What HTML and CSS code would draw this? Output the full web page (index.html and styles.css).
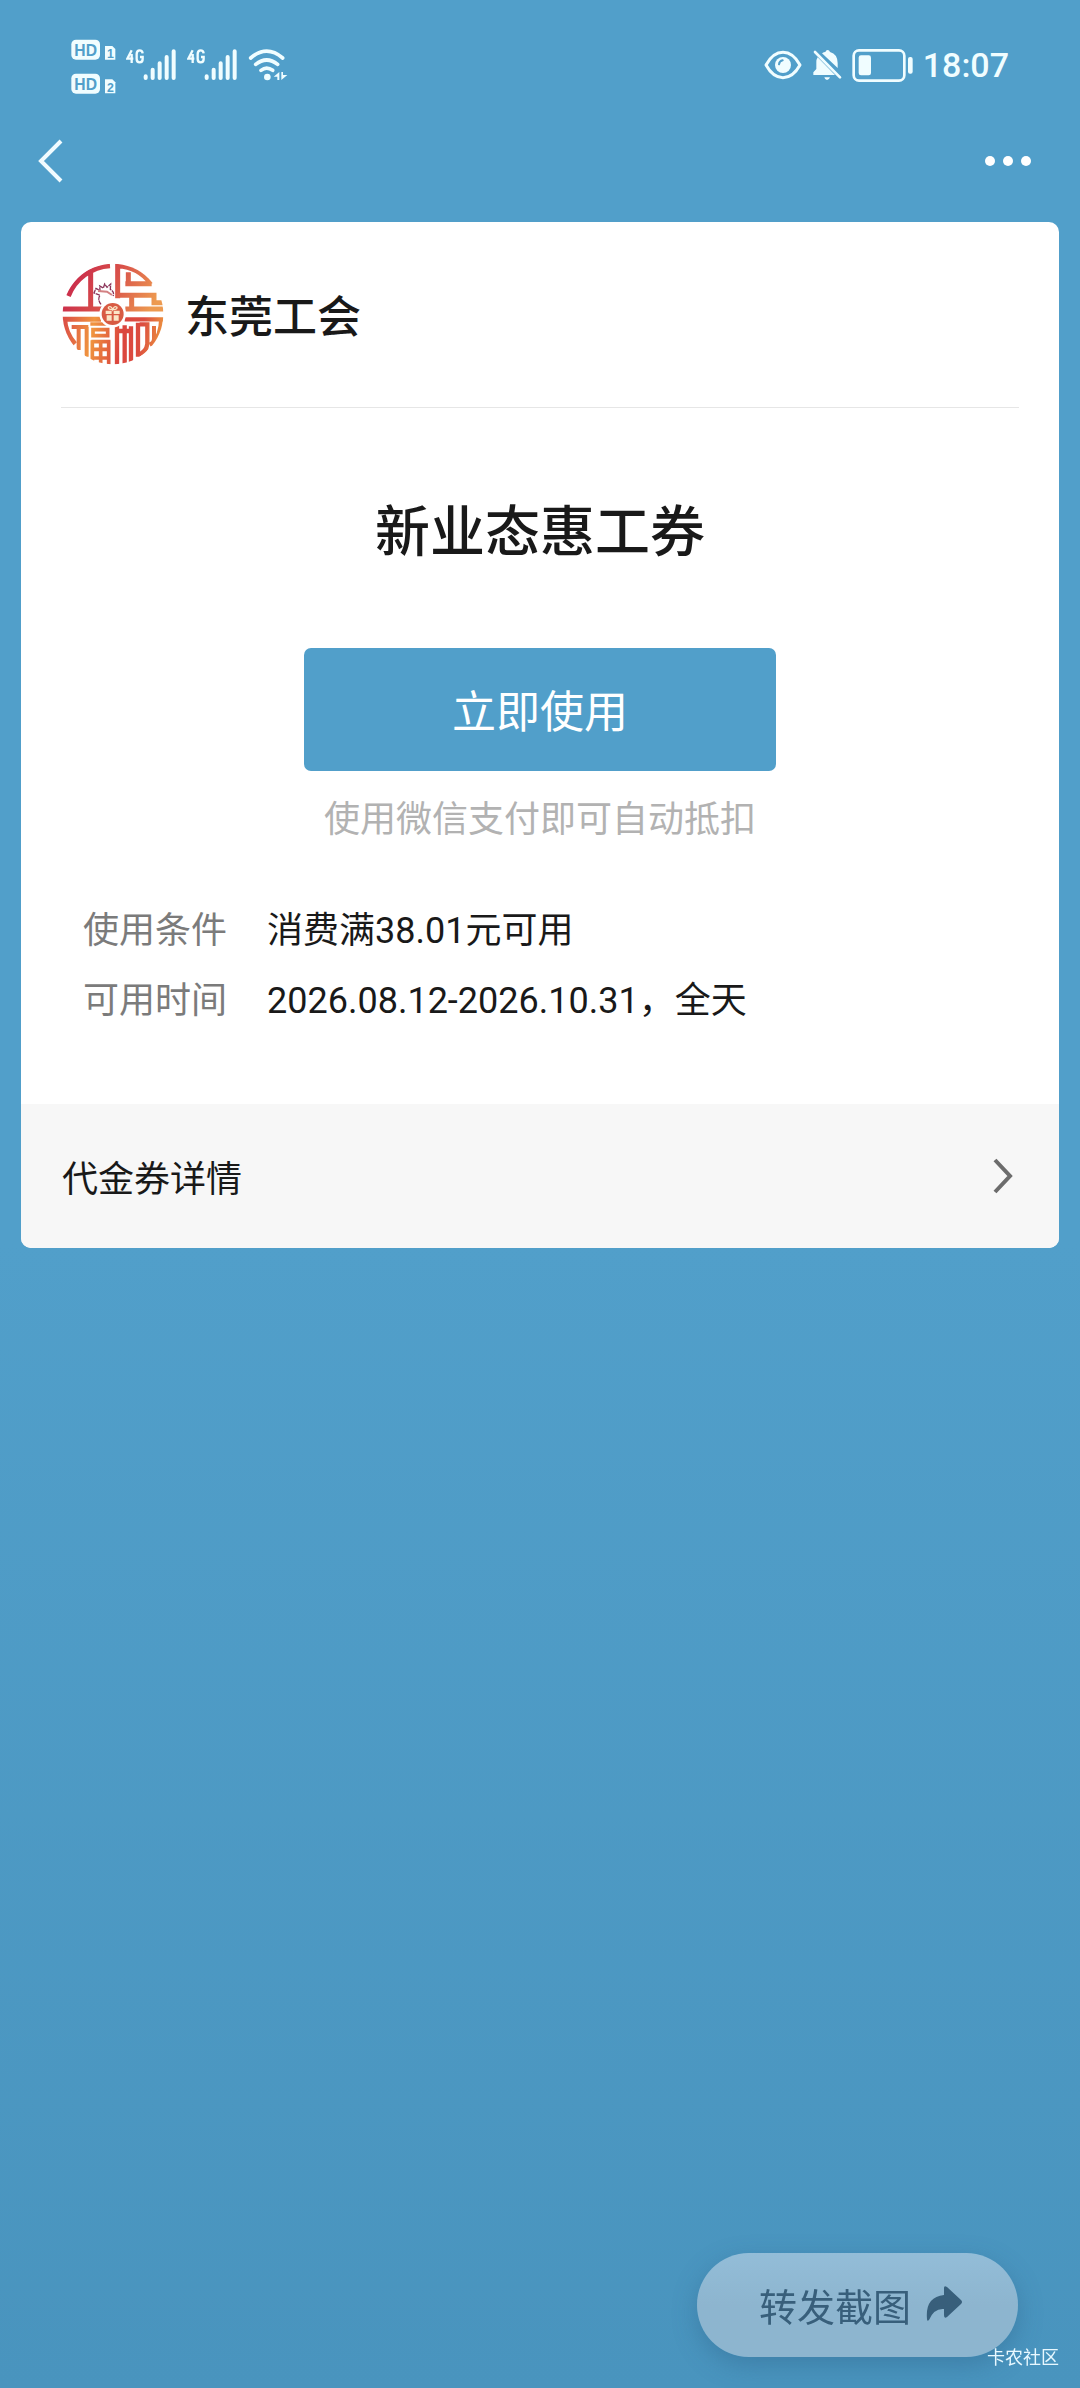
FILE: index.html
```
<!DOCTYPE html>
<html lang="zh-CN">
<head>
  <meta charset="UTF-8">
  <meta name="viewport" content="width=device-width, initial-scale=1.0">
  <title>新业态惠工券</title>
  <link rel="stylesheet" href="styles.css">
</head>
<body>

<div class="status-bar">
  <div class="status-group status-left">
    <svg width="45" height="60" viewBox="63 30 135 180">
      <rect x="64" y="44" width="86" height="60" rx="14" fill="#f0fdff"/>
      <text class="hd" x="107" y="92">HD</text>
      <path d="M165 63h22l9 9v32h-31z" fill="#f0fdff"/>
      <text class="sim" x="181" y="99">1</text>
      <rect x="64" y="146" width="86" height="60" rx="14" fill="#f0fdff"/>
      <text class="hd" x="107" y="194">HD</text>
      <path d="M165 163h22l9 9v33h-31z" fill="#f0fdff"/>
      <text class="sim" x="181" y="200">2</text>
    </svg>
    <svg width="51" height="60" viewBox="229 30 153 180">
      <path d="M246 76L233 101H251M246 87V114" class="net"/>
      <path d="M279 85Q278 76 270 76Q261 76 261 87V102Q261 112 270 112Q279 112 279 102V96H271" class="net"/>
      <path d="M288 154v5M309 134v25M330 115v44M351 96v63M372 79v80" class="bars"/>
    </svg>
    <svg width="51" height="60" viewBox="229 30 153 180">
      <path d="M246 76L233 101H251M246 87V114" class="net"/>
      <path d="M279 85Q278 76 270 76Q261 76 261 87V102Q261 112 270 112Q279 112 279 102V96H271" class="net"/>
      <path d="M288 154v5M309 134v25M330 115v44M351 96v63M372 79v80" class="bars"/>
    </svg>
    <svg width="40" height="60" viewBox="588 30 120 180">
      <path d="M596 99Q644 58 692 99M611 118Q644 92 677 118M627 136Q644 123 662 136" fill="none" stroke="#f0fdff" stroke-width="11" stroke-linecap="round"/>
      <circle cx="646" cy="156" r="10" fill="#f0fdff"/>
      <path d="M682 141v24h-6v-10h-11zM688 165v-24h5v9h13z" fill="#f0fdff"/>
    </svg>
  </div>
  <div class="status-group status-right">
    <svg width="38" height="60" viewBox="73 15 114 180">
      <path d="M79 105Q100 67 130 67Q160 67 181 105Q160 143 130 143Q100 143 79 105z" fill="none" stroke="#f0fdff" stroke-width="9" stroke-linejoin="round"/>
      <circle cx="130" cy="105" r="24" fill="#f0fdff"/>
      <path d="M118 103q1-10 11-12" fill="none" stroke="#519fca" stroke-width="6" stroke-linecap="round"/>
    </svg>
    <svg width="30" height="60" viewBox="218 15 90 180">
      <path d="M222 135v-8l9-10v-20q0-9 4-15l52 53zM248 70q6-4 10-4q2-6 7-6t7 6q23 6 23 34v14z" fill="#f0fdff"/>
      <path d="M255 142h17q-3 8-9 8t-8-8z" fill="#f0fdff"/>
      <path d="M227 66l75 76" stroke="#f0fdff" stroke-width="8" stroke-linecap="round"/>
    </svg>
    <svg width="61" height="60" viewBox="343 15 183 180">
      <rect x="348" y="61" width="152" height="91" rx="16" fill="none" stroke="#f0fdff" stroke-width="8"/>
      <rect x="363" y="76" width="37" height="60" rx="7" fill="#f0fdff"/>
      <rect x="511" y="81" width="14" height="50" rx="6" fill="#f0fdff"/>
    </svg>
    <span class="time">18:07</span>
  </div>
</div>

<div class="nav-bar">
  <button class="icon-btn" aria-label="返回">
    <svg width="26" height="46" viewBox="0 0 26 46"><path d="M23 3L3 23L23 43" fill="none" stroke="#f0fbff" stroke-width="4"/></svg>
  </button>
  <button class="icon-btn" aria-label="更多">
    <svg width="48" height="12" viewBox="0 0 48 12" fill="#fff"><circle cx="6" cy="6" r="5"/><circle cx="24" cy="6" r="5"/><circle cx="42" cy="6" r="5"/></svg>
  </button>
</div>

<main class="card">
  <div class="merchant">
    <svg class="logo" width="102" height="102" viewBox="23 25 306 306">
      <defs>
        <linearGradient id="top" gradientUnits="userSpaceOnUse" x1="75" y1="55" x2="290" y2="165">
          <stop offset="0" stop-color="#cc304b"/><stop offset=".45" stop-color="#d9524a"/><stop offset="1" stop-color="#ed9a50"/>
        </linearGradient>
        <linearGradient id="bottom" gradientUnits="userSpaceOnUse" x1="30" y1="200" x2="320" y2="250">
          <stop offset="0" stop-color="#dc5046"/><stop offset=".3" stop-color="#f0953f"/><stop offset=".6" stop-color="#db453e"/><stop offset=".8" stop-color="#dc4d3f"/><stop offset="1" stop-color="#eb8f3f"/>
        </linearGradient>
        <clipPath id="disc"><circle cx="176" cy="178" r="151"/></clipPath>
      </defs>
      <g clip-path="url(#disc)" fill="none" stroke-width="15">
        <g stroke="url(#top)">
          <path d="M42 124A145 145 0 0 1 167 33M109 55V158M23 163H148"/>
          <path d="M190 27V131M190 33Q253 36 291 88M222 53V93M213 87H292M190 122H299V144H328M232 122V163M213 163H328"/>
        </g>
        <g stroke="url(#bottom)">
          <path d="M23 194H140M31 194Q33 235 62 268"/>
          <path d="M52 217H102M73 217V286M97 217V306" stroke-width="12"/>
          <path d="M108 208H167M116 225H160V243H116zM111 261H168M114 257V322M139 261V330M163 257V332M114 284H164M114 310H164" stroke-width="11"/>
          <path d="M188 207V331M211 212V331M184 229H235M230 215V322" stroke-width="13"/>
          <path d="M211 194H328M251 204V306M256 209H279V268Q276 292 252 300" stroke-width="13"/>
          <path d="M299 214V252Q299 264 286 270M320 194Q320 240 292 272" stroke-width="12"/>
        </g>
      </g>
      <circle cx="175" cy="178" r="40" fill="#fff"/>
      <circle cx="175" cy="178" r="33" fill="#d85b43"/>
      <path d="M154 168h18v10h-18zM178 168h18v10h-18zM157 182h15v16h-15zM178 182h15v16h-15z" fill="#fbe6c6"/>
      <path d="M174 165Q158 164 163 157Q171 153 175 165Q179 153 187 157Q192 164 176 165" fill="none" stroke="#fbe6c6" stroke-width="4"/>
      <path d="M140 149Q128 134 137 122L119 115L125 101L137 108L136 94L147 100L151 88L158 98L169 88L168 104Q182 113 176 124" fill="none" stroke="#8b3359" stroke-width="4" stroke-dasharray="13 2"/>
      <path d="M131 109l27 2l15 10" fill="none" stroke="#d38183" stroke-width="6"/>
    </svg>
    <span class="merchant-name">东莞工会</span>
  </div>

  <div class="coupon">
    <h1>新业态惠工券</h1>
    <button class="use-btn">立即使用</button>
    <p class="hint">使用微信支付即可自动抵扣</p>
    <dl class="info">
      <dt>使用条件</dt>
      <dd>消费满38.01元可用</dd>
      <dt>可用时间</dt>
      <dd>2026.08.12-2026.10.31，全天</dd>
    </dl>
  </div>

  <a class="detail" href="#">
    <span>代金券详情</span>
    <svg width="20" height="36" viewBox="0 0 20 36"><path d="M2 2L17 18L2 34" fill="none" stroke="#6c6c6c" stroke-width="4"/></svg>
  </a>
</main>

<button class="share-btn">
  转发截图
  <svg width="36" height="36" viewBox="0 0 36 36"><path d="M18 2Q18-1 21 1L35 14Q37 16 35 18L21 31Q18 33 18 29V23Q8 22 3 34Q1 36 1 33Q-1 11 18 9z" fill="#385f7b"/></svg>
</button>
<span class="watermark">卡农社区</span>

</body>
</html>
```
FILE: styles.css
```
* { box-sizing: border-box; }
body {
  margin: 0;
  min-height: 100vh;
  font-family: Roboto, "Noto Sans CJK SC", sans-serif;
  font-size: 36px;
  color: #191919;
  background: linear-gradient(#519fca 0%, #519fca 52%, #4994be 100%);
}
button {
  font-family: inherit;
  border: none;
  cursor: pointer;
}
svg {
  display: block;
  flex-shrink: 0;
}
.status-bar {
  display: flex;
  justify-content: space-between;
  align-items: center;
  height: 130px;
  padding: 0 71px;
}
.status-group {
  display: flex;
  align-items: center;
  gap: 10px;
}
.time {
  font-size: 34px;
  font-weight: 500;
  line-height: 60px;
  color: #f0fdff;
}
.hd {
  font: bold 47px "Liberation Sans", sans-serif;
  fill: #519fca;
  text-anchor: middle;
}
.sim {
  font: bold 37px "Liberation Sans", sans-serif;
  fill: #519fca;
  text-anchor: middle;
}
.net {
  fill: none;
  stroke: #f0fdff;
  stroke-width: 7px;
}
.bars {
  fill: none;
  stroke: #f0fdff;
  stroke-width: 12px;
  stroke-linecap: round;
}
.nav-bar {
  display: flex;
  justify-content: space-between;
  align-items: center;
  height: 62px;
  padding: 0 48px 0 38px;
}
.icon-btn {
  padding: 0;
  background: none;
}
.card {
  margin: 30px 21px 0;
  background: #fff;
  border-radius: 10px;
  overflow: hidden;
}
.merchant {
  display: flex;
  align-items: center;
  gap: 21px;
  margin: 0 40px;
  padding: 41px 1px 42px;
  border-bottom: 1px solid #e6e6e6;
}
.merchant-name {
  font-size: 44px;
  font-weight: 500;
}
.coupon {
  display: flex;
  flex-direction: column;
  align-items: center;
  padding: 82px 62px 76px;
}
h1 {
  margin: 0 0 74px;
  font-size: 55px;
  font-weight: 500;
  line-height: 84px;
}
.use-btn {
  width: 472px;
  max-width: 100%;
  height: 123px;
  padding: 0 0 2px;
  font-size: 44px;
  color: #fff;
  background: #519fca;
  border-radius: 7px;
}
.hint {
  margin: 22px 0 57px;
  line-height: 54px;
  color: #b2b2b2;
}
.info {
  align-self: stretch;
  display: grid;
  grid-template-columns: auto 1fr;
  column-gap: 40px;
  row-gap: 16px;
  margin: 0;
  line-height: 54px;
}
dt { color: #7b7b7b; }
dd { margin: 0; }
.detail {
  display: flex;
  justify-content: space-between;
  align-items: center;
  height: 144px;
  padding: 0 46px 0 41px;
  color: inherit;
  text-decoration: none;
  background: #f7f7f7;
}
.share-btn {
  position: fixed;
  right: 62px;
  bottom: 31px;
  display: flex;
  align-items: center;
  gap: 15px;
  height: 104px;
  padding: 0 56px 2px 62px;
  font-size: 38px;
  color: #385f7b;
  background: linear-gradient(#93bdd8, #8db5cf 50%);
  border-radius: 52px;
  box-shadow: 0 8px 24px rgba(40, 90, 125, 0.35);
}
.watermark {
  position: fixed;
  right: 21px;
  bottom: 17px;
  font-size: 18px;
  line-height: 26px;
  color: #e8f8ff;
}
```
